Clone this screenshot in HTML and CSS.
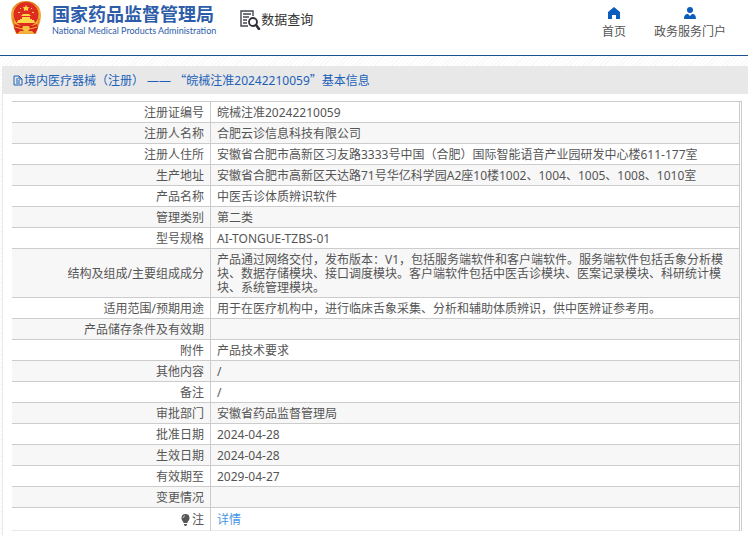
FILE: index.html
```html
<!DOCTYPE html>
<html lang="zh-CN">
<head>
    <meta charset="UTF-8">
    <meta name="viewport" content="width=device-width, initial-scale=1.0">
    <title>国家药品监督管理局 - 数据查询</title>
    <link rel="stylesheet" href="styles.css">
</head>
<body>

<!-- 页头 -->
<header class="header">
    <a class="logo" href="#">
        <svg class="emblem" viewBox="0 0 32 35" aria-hidden="true">
            <path d="M16 1C7 1 1 7 1 15c0 6 2 10 3 13l2 6h20l2-6c1-3 3-7 3-13C31 7 25 1 16 1z" fill="#efad35"/>
            <path d="M3 18c0 5 2 8 4 11M29 18c0 5-2 8-4 11M3 9c3-5 7-7 13-7s10 2 13 7" fill="none" stroke="#dc7426" stroke-width="1"/>
            <circle cx="16" cy="14.500" r="12.500" fill="#df2c20"/>
            <path d="M16 5l1 2h2l-1 2 0 2-2-1-2 1 0-2-1-2h2z" fill="#ffd54a"/>
            <path d="M10 8h1v1h-1zM21 8h1v1h-1zM8 12h2v1H8zM22 12h2v1h-2z" fill="#ffd54a"/>
            <path d="M11 16l2-2h6l2 2zM12 17h8v2h-8zM8 20h16l1 3H7zM10 19h12v1H10z" fill="#ffd54a"/>
            <path d="M5 24c5 3 17 3 22 0l1 4-3 6-5-3h-8l-5 3-3-6z" fill="#d8241d"/>
            <path d="M5 27l7 2M27 27l-7 2" stroke="#f2b33c" stroke-width="1"/>
            <path d="M13 26h6l1 3-2 2h-4l-2-2z" fill="#f5c340"/>
            <path d="M7 34l3-3h12l3 3-5-1h-8z" fill="#f2b33c"/>
        </svg>
        <span class="logo-text">
            <strong class="logo-cn">国家药品监督管理局</strong>
            <span class="logo-en">National Medical Products Administration</span>
        </span>
    </a>
    <a class="query" href="#">
        <svg class="query-icon" viewBox="0 0 21 20" aria-hidden="true">
            <path d="M8 16H1V1h12v5M3 4h8M3 7h6M3 10h4M3 13h4" fill="none" stroke="#45454f" stroke-width="1.400"/>
            <circle cx="13" cy="12" r="4" fill="#fff" stroke="#30303c" stroke-width="1.800"/>
            <path d="M16 15l3 4" stroke="#30303c" stroke-width="2.500" stroke-linecap="round"/>
        </svg>
        <span>数据查询</span>
    </a>
    <nav class="nav">
        <a href="#">
            <svg viewBox="0 0 12 12" aria-hidden="true"><path d="M6 0l6 5v7H8V8H4v4H0V5z" fill="#0b5cbd"/></svg>
            首页
        </a>
        <a href="#">
            <svg viewBox="0 0 12 12" aria-hidden="true"><circle cx="6" cy="3" r="3" fill="#0b5cbd"/><path d="M0 12c0-3 1-5 4-5l2 2 2-2c3 0 4 2 4 5z" fill="#0b5cbd"/></svg>
            政务服务门户
        </a>
    </nav>
</header>

<!-- 注册信息 -->
<main class="panel">
    <h1 class="panel-title">
        <svg class="doc-icon" viewBox="0 0 10 11" aria-hidden="true"><path d="M1 1h5l3 3v6H1zM6 1v3h3M3 4h2M3 6h4M3 8h4" fill="none" stroke="#1c61b8"/></svg>
        <span>境内医疗器械（注册） —— <span class="quote">“</span>皖械注准20242210059<span class="quote">”</span>基本信息</span>
    </h1>
    <div class="table-box">
        <table class="info">
            <tbody>
                <tr><th scope="row">注册证编号</th><td>皖械注准20242210059</td></tr>
                <tr><th scope="row">注册人名称</th><td>合肥云诊信息科技有限公司</td></tr>
                <tr><th scope="row">注册人住所</th><td>安徽省合肥市高新区习友路3333号中国（合肥）国际智能语音产业园研发中心楼611-177室</td></tr>
                <tr><th scope="row">生产地址</th><td>安徽省合肥市高新区天达路71号华亿科学园A2座10楼1002、1004、1005、1008、1010室</td></tr>
                <tr><th scope="row">产品名称</th><td>中医舌诊体质辨识软件</td></tr>
                <tr><th scope="row">管理类别</th><td>第二类</td></tr>
                <tr><th scope="row">型号规格</th><td>AI-TONGUE-TZBS-01</td></tr>
                <tr><th scope="row">结构及组成/主要组成成分</th><td>产品通过网络交付，发布版本：V1，包括服务端软件和客户端软件。服务端软件包括舌象分析模块、数据存储模块、接口调度模块。客户端软件包括中医舌诊模块、医案记录模块、科研统计模块、系统管理模块。</td></tr>
                <tr><th scope="row">适用范围/预期用途</th><td>用于在医疗机构中，进行临床舌象采集、分析和辅助体质辨识，供中医辨证参考用。</td></tr>
                <tr><th scope="row">产品储存条件及有效期</th><td></td></tr>
                <tr><th scope="row">附件</th><td>产品技术要求</td></tr>
                <tr><th scope="row">其他内容</th><td>/</td></tr>
                <tr><th scope="row">备注</th><td>/</td></tr>
                <tr><th scope="row">审批部门</th><td>安徽省药品监督管理局</td></tr>
                <tr><th scope="row">批准日期</th><td>2024-04-28</td></tr>
                <tr><th scope="row">生效日期</th><td>2024-04-28</td></tr>
                <tr><th scope="row">有效期至</th><td>2029-04-27</td></tr>
                <tr><th scope="row">变更情况</th><td></td></tr>
                <tr class="note">
                    <th scope="row"><svg class="bulb-icon" viewBox="0 0 9 12" aria-hidden="true"><path d="M4.500 0a4 4 0 0 0-4 4c0 3 2 3 2 5h4c0-2 2-2 2-5a4 4 0 0 0-4-4zM3 10h3v1L5 12H4L3 11z" fill="#555"/><path d="M2 4c0-1 1-2 2-2" fill="none" stroke="#ddd"/></svg>注</th>
                    <td><a href="#">详情</a></td>
                </tr>
            </tbody>
        </table>
    </div>
</main>

</body>
</html>
```
FILE: styles.css
```css
body {
    margin: 0;
    font-family: "Noto Sans", "Noto Sans CJK SC", sans-serif;
    font-size: 12px;
    line-height: 14px;
    color: #555;
    background: repeating-linear-gradient(135deg, #fff 0, #fff 2px, #f8f8f8 2px, #f8f8f8 3px);
}
a {
    color: inherit;
    text-decoration: none;
}
svg {
    flex: none;
}

/* 页头 */
.header {
    display: flex;
    align-items: flex-start;
    box-sizing: border-box;
    height: 56px;
    padding: 0 22px 0 10px;
    background: #fff;
    border-bottom: 1px solid #1d5290;
}
.logo {
    display: flex;
    gap: 10px;
    color: #2d5ca9;
}
.emblem {
    width: 32px;
    height: 35px;
}
.logo-text {
    display: flex;
    flex-direction: column;
    padding-top: 3px;
    white-space: nowrap;
}
.logo-cn {
    font-size: 18px;
    line-height: 22px;
}
.logo-en {
    font-family: Lato, Arial, sans-serif;
    font-size: 9px;
    line-height: 12px;
}
.query {
    display: flex;
    margin-left: 24px;
    padding-top: 10px;
    font-size: 13px;
    line-height: 18px;
    color: #333;
}
.query-icon {
    width: 21px;
    height: 20px;
}
.nav {
    display: flex;
    gap: 28px;
    margin-left: auto;
    padding-top: 7px;
}
.nav a {
    display: flex;
    flex-direction: column;
    align-items: center;
    gap: 6px;
}
.nav svg {
    width: 12px;
    height: 12px;
}

/* 内容 */
.panel {
    margin: 10px 0 0 2px;
    padding-bottom: 6px;
    background: #fff;
    border-left: 1px solid #e8e8e8;
}
.panel-title {
    display: flex;
    align-items: center;
    margin: 0;
    padding: 7px 10px 6px;
    font-size: 12px;
    font-weight: normal;
    color: #1c61b8;
    background: #e8e8e8;
}
.quote {
    font-family: "Noto Sans CJK SC", sans-serif;
}
.doc-icon {
    width: 10px;
    height: 11px;
    margin-right: 1px;
}
.table-box {
    margin: 7px 6px 0 9px;
    padding-right: 1px;
    border-top: 1px solid #ccc;
    border-right: 1px solid #ccc;
}
.info {
    width: 100%;
    border-spacing: 0;
    border-right: 1px solid #ccc;
}
.info th,
.info td {
    height: 14px;
    padding: 4px 6px 2px;
    border-bottom: 1px solid #ccc;
}
.info th {
    width: 186px;
    border-right: 1px solid #ccc;
    font-weight: normal;
    text-align: right;
}
.info tr:nth-child(even) {
    background: #f7f7f7;
}
.info .note th,
.info .note td {
    height: 16px;
    border-bottom-color: #e8e8e8;
}
.bulb-icon {
    width: 9px;
    height: 12px;
    margin-right: 2px;
    vertical-align: -2px;
}
.note a {
    color: #4595e6;
}
```
